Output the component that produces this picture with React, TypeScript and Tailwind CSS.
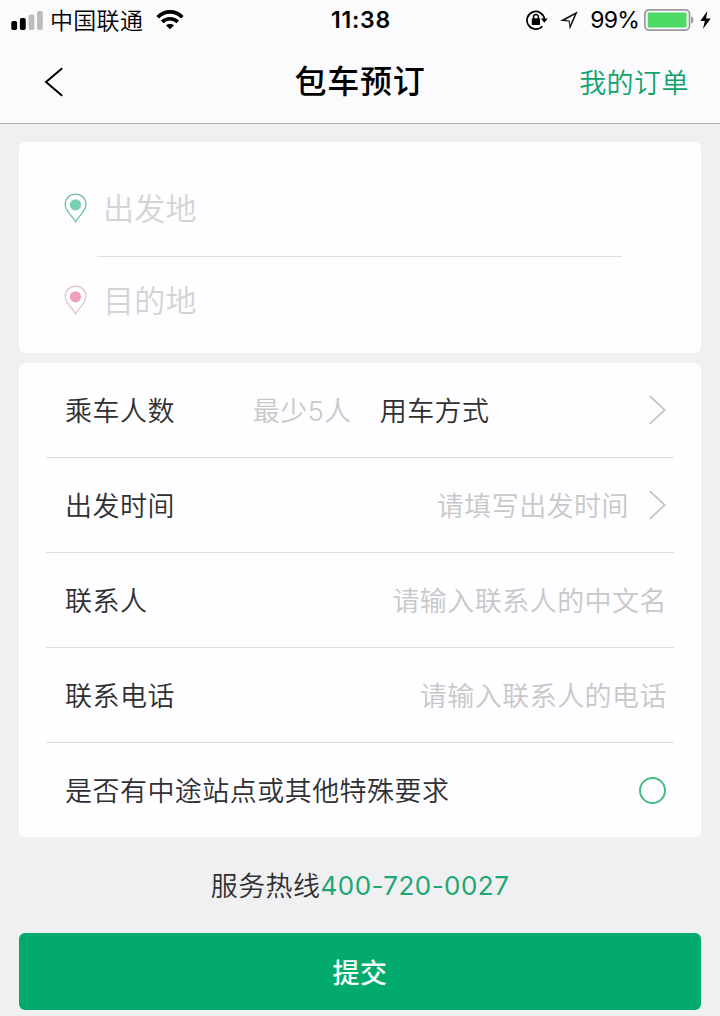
import type { ReactNode } from "react";

function SignalBars() {
  return (
    <svg width="32" height="19" viewBox="0 0 32 19">
      <rect x="0.3" y="10" width="5.8" height="9" rx="1.8" fill="#000" />
      <rect x="8.9" y="7" width="5.8" height="12" rx="1.8" fill="#000" />
      <rect x="17.6" y="3.5" width="5.8" height="15.5" rx="1.8" fill="#bdbdbf" />
      <rect x="26" y="0" width="5.8" height="19" rx="1.8" fill="#bdbdbf" />
    </svg>
  );
}

function WifiIcon() {
  return (
    <svg width="28" height="20" viewBox="0 0 28 20" fill="none" stroke="#000" strokeWidth="3.6">
      <path d="M1.7 7.2C8.6 0.1 19.4 0.1 26.3 7.2" />
      <path d="M6.2 11.9c4.5-4.3 11.1-4.3 15.6 0" />
      <path d="M14 19.2l-4-3.7c2.3-1.9 5.7-1.9 8 0z" fill="#000" stroke="none" />
    </svg>
  );
}

function RotationLock() {
  return (
    <svg width="22" height="20" viewBox="0 0 22 20" fill="none">
      <path d="M16.3 16.2A8.8 8.8 0 1 1 18.5 9" stroke="#000" strokeWidth="1.7" />
      <path d="M14.8 8.4h6.9l-3.3 4.4z" fill="#000" />
      <rect x="5.8" y="8.3" width="8.2" height="6.6" rx="0.7" fill="#000" />
      <path d="M7.6 9V6.9a2.4 2.4 0 0 1 4.8 0V9" stroke="#000" strokeWidth="1.5" />
    </svg>
  );
}

function LocationArrow() {
  return (
    <svg width="18" height="19" viewBox="0 0 18 19">
      <path d="M17.8 0.2L0 9.8l8.6.8 1.2 8z M14.6 3.7L9.9 14.2 9.7 9.5 5.2 8.9z" fill="#111" fillRule="evenodd" />
    </svg>
  );
}

function Battery() {
  return (
    <svg width="51" height="22" viewBox="0 0 51 22" fill="none">
      <rect x="0.9" y="0.9" width="44.6" height="20.2" rx="4" stroke="#98989b" strokeWidth="1.7" />
      <rect x="3.7" y="3.6" width="38.8" height="14.8" rx="1.2" fill="#4cd964" />
      <path d="M47.2 7.2c3 .8 3 6.8 0 7.6z" fill="#98989b" />
    </svg>
  );
}

function Pin({ ring, dot }: { ring: string; dot: string }) {
  return (
    <svg width="23" height="30" viewBox="0 0 23 30" fill="none" className="shrink-0">
      <path
        d="M11.6 28.8C9.4 23.8 1.2 18.6 1.2 11.3a10.4 10.2 0 0 1 20.8 0c0 7.3-8.2 12.5-10.4 17.5z"
        stroke={ring}
        strokeWidth="1.3"
      />
      <circle cx="11.5" cy="11.8" r="5.6" fill={dot} />
    </svg>
  );
}

function Chevron() {
  return (
    <svg width="18" height="30" viewBox="0 0 18 30" fill="none" className="shrink-0">
      <path d="M0.8 1.2L15.8 15l-15 13.8" stroke="#c4c4c6" strokeWidth="1.7" />
    </svg>
  );
}

function Row({ label, children }: { label: string; children: ReactNode }) {
  return (
    <div className="flex h-[95px] items-center border-b border-[#dddde0] pr-[7px] pl-[19px] last:h-[94px] last:border-b-0">
      <span className="pt-[3px] text-[#303032]">{label}</span>
      {children}
    </div>
  );
}

function Hint({ children }: { children: ReactNode }) {
  return <span className="ml-auto pt-[3px] text-[#c8c8ca]">{children}</span>;
}

export default function App() {
  return (
    <div className="h-[1016px] w-[720px] overflow-hidden bg-[#f0eff2] font-[Inter,'Noto_Sans_CJK_SC',sans-serif] text-[27px] leading-none font-[350] tracking-[0.46px] whitespace-nowrap">
      <header className="h-[124px] border-b border-[#adadb0] bg-[#fbfafd]">
        {/* Status bar */}
        <div className="grid h-10 grid-cols-[1fr_auto_1fr] items-center pr-[9px] pl-[11px] text-[23px] font-normal tracking-normal text-black">
          <div className="flex items-center">
            <SignalBars />
            <span className="mr-[13px] ml-[7px] pt-0.5 font-[350] tracking-[0.3px]">中国联通</span>
            <WifiIcon />
          </div>
          <span className="text-[23px] font-semibold tracking-[0.8px]">11:38</span>
          <div className="flex items-center justify-end">
            <RotationLock />
            <span className="ml-3">
              <LocationArrow />
            </span>
            <span className="mr-[5px] ml-3 tracking-[-0.8px]">99%</span>
            <Battery />
            <svg width="11" height="18" viewBox="0 0 11 18" className="ml-[5px]">
              <path d="M7.4 0L0.3 10h4.5L3 18l7.7-10.6H6z" fill="#000" />
            </svg>
          </div>
        </div>

        {/* Title bar */}
        <div className="grid h-[83px] grid-cols-[1fr_auto_1fr] items-center px-8">
          <svg width="20" height="30" viewBox="0 0 20 30" fill="none" className="ml-3">
            <path d="M18.2 1.2L2 15l16.2 13.8" stroke="#000" strokeWidth="2" />
          </svg>
          <h1 className="text-[32px] font-medium tracking-[0.7px] text-black">包车预订</h1>
          <span className="-mr-px justify-self-end pt-1 text-[#0fa36c]">我的订单</span>
        </div>
      </header>

      <main className="px-[19px] pt-[18px]">
        <section className="h-[211px] rounded-md bg-[#fefdff] pl-[45px] text-[31px] tracking-[0.2px] text-[#d4d4d6]">
          <div className="flex h-[114px] items-center pt-[18px]">
            <Pin ring="#72bfa1" dot="#79d0b0" />
            <span className="ml-4">出发地</span>
          </div>
          <div className="ml-[33px] h-px w-[525px] bg-[#dddde0]" />
          <div className="flex h-[86px] items-center">
            <Pin ring="#e3c3cd" dot="#f0a1b8" />
            <span className="ml-4">目的地</span>
          </div>
        </section>

        <section className="mt-[10px] h-[474px] rounded-md bg-[#fefdff] px-[27px]">
          <Row label="乘车人数">
            <span className="ml-[78px] pt-[3px] text-[#c8c8ca]">最少5人</span>
            <span className="ml-7 pt-[3px] text-[#303032]">用车方式</span>
            <span className="ml-auto">
              <Chevron />
            </span>
          </Row>
          <Row label="出发时间">
            <Hint>请填写出发时间</Hint>
            <span className="ml-5">
              <Chevron />
            </span>
          </Row>
          <Row label="联系人">
            <Hint>请输入联系人的中文名</Hint>
          </Row>
          <Row label="联系电话">
            <Hint>请输入联系人的电话</Hint>
          </Row>
          <Row label="是否有中途站点或其他特殊要求">
            <span className="mr-px ml-auto size-[27px] rounded-full border-2 border-[#45bb82]" />
          </Row>
        </section>

        <p className="flex h-24 items-center justify-center pt-[3px] text-[#303032]">
          服务热线<span className="pb-0.5 text-[26px] font-normal text-[#1ba873]">400-720-0027</span>
        </p>

        <button className="block h-[77px] w-full rounded-md bg-[#03aa6d] pt-[3px] font-medium text-[#f7fffb]">提交</button>
      </main>
    </div>
  );
}
